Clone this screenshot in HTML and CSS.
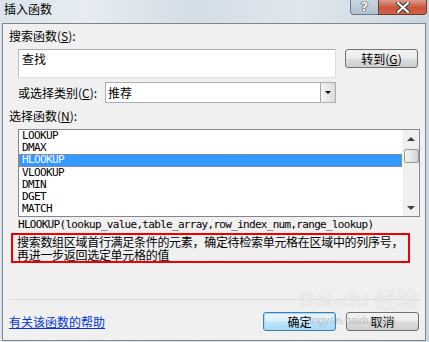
FILE: index.html
```html
<!DOCTYPE html>
<html lang="zh-CN">
<head>
  <meta charset="UTF-8">
  <title>插入函数</title>
  <link rel="stylesheet" href="styles.css">
</head>
<body>
  <div class="window">
    <div class="titlebar">
      <span class="caption">插入函数</span>
      <div class="caption-btns">
        <div class="cap-help">?</div>
        <div class="cap-close">
          <svg width="14" height="11" viewBox="0 0 14 11">
            <path d="M2 1 L12 10 M12 1 L2 10" stroke="#3a3a3a" stroke-width="4.2" stroke-linecap="round"/>
            <path d="M2 1 L12 10 M12 1 L2 10" stroke="#fff" stroke-width="2.2" stroke-linecap="round"/>
          </svg>
        </div>
      </div>
    </div>

    <div class="client">
      <div class="label">搜索函数(<u>S</u>):</div>
      <div class="row-search">
        <div class="textbox">查找</div>
        <button class="btn">转到(<u>G</u>)</button>
      </div>

      <div class="row-category">
        <span class="label-cat">或选择类别(<u>C</u>):</span>
        <div class="combo">
          <span>推荐</span>
          <div class="combo-arrow"></div>
        </div>
      </div>

      <div class="label label-list">选择函数(<u>N</u>):</div>
      <div class="listbox">
        <div class="items">
          <div class="item">LOOKUP</div>
          <div class="item">DMAX</div>
          <div class="item selected">HLOOKUP</div>
          <div class="item">VLOOKUP</div>
          <div class="item">DMIN</div>
          <div class="item">DGET</div>
          <div class="item">MATCH</div>
        </div>
        <div class="scrollbar">
          <div class="arrow-up"></div>
          <div class="thumb"></div>
          <div class="track"></div>
          <div class="arrow-down"></div>
        </div>
      </div>

      <div class="signature">HLOOKUP(lookup_value,table_array,row_index_num,range_lookup)</div>
      <div class="desc">
        <div>搜索数组区域首行满足条件的元素，确定待检索单元格在区域中的列序号，</div>
        <div>再进一步返回选定单元格的值</div>
      </div>

      <div class="separator"></div>

      <div class="row-bottom">
        <a class="help-link" href="#">有关该函数的帮助</a>
        <div class="buttons">
          <button class="btn btn-default">确定</button>
          <button class="btn">取消</button>
        </div>
      </div>

      <div class="watermark">
        <div class="wm-logo">Bai<span class="paw">●</span>du 经验</div>
        <div class="wm-url">jingyan.baidu.com</div>
      </div>
    </div>
  </div>
</body>
</html>
```

FILE: styles.css
```css
body {
  margin: 0;
  font-family: "Noto Sans CJK SC", "Liberation Sans", sans-serif;
  font-size: 12px;
  color: #000;
}
.window {
  width: 429px;
  height: 342px;
  background: linear-gradient(90deg, #dbe4ec 0%, #e6ecf1 20%, #d3dde6 45%, #dfe7ee 70%, #c9d6df 100%);
  overflow: hidden;
}
.titlebar {
  height: 23px;
  display: flex;
  align-items: flex-start;
}
.caption {
  padding: 2px 0 0 4px;
  line-height: 14px;
}
.caption-btns {
  margin-left: auto;
  margin-right: 2px;
  display: flex;
}
.cap-help {
  width: 27px;
  height: 14px;
  border: 1px solid #6f7e8c;
  border-top: none;
  border-right: none;
  border-radius: 0 0 0 4px;
  background: linear-gradient(#c9d5e0, #b3c2d0);
  color: #fff;
  font: bold 13px "DejaVu Sans", sans-serif;
  line-height: 13px;
  text-align: center;
  text-shadow: 0 0 1px #333, 0 0 1px #333, 0 0 1px #333;
}
.cap-close {
  width: 47px;
  height: 14px;
  border: 1px solid #6f3a32;
  border-top: none;
  border-radius: 0 0 4px 0;
  background: linear-gradient(#d99c8c, #c8563e 55%, #d4613f);
  display: flex;
  justify-content: center;
  align-items: center;
}
.client {
  position: relative;
  margin-left: 2px;
  width: 424px;
  height: 318px;
  box-sizing: border-box;
  border: 1px solid #7b8793;
  background: #f0f0f0;
  padding: 6px 0 0 6px;
}
.label {
  line-height: 12px;
}
.row-search {
  display: flex;
  align-items: flex-start;
  gap: 9px;
  margin: 7px 0 0 9px;
}
.textbox {
  width: 318px;
  height: 29px;
  box-sizing: border-box;
  border: 1px solid #abadb3;
  border-color: #a9aeb4 #dadfe4 #dadfe4 #b9bec4;
  background: #fff;
  padding: 2px 0 0 3px;
  line-height: 13px;
}
.btn {
  width: 73px;
  height: 19px;
  box-sizing: border-box;
  border: 1px solid #707070;
  border-radius: 3px;
  background: linear-gradient(#f2f2f2 0%, #ebebeb 48%, #dddddd 52%, #cfcfcf 100%);
  font-family: "Noto Sans CJK SC", sans-serif;
  font-size: 12px;
  line-height: 15px;
  padding: 0;
  color: #000;
}
.btn-default {
  border-color: #3c7fb1;
  box-shadow: inset 0 0 0 1px #a7d8f5;
  background: linear-gradient(#eaf6fd 0%, #d9effc 48%, #bee6fd 52%, #a7d9f5 100%);
}
.row-category {
  display: flex;
  align-items: center;
  margin: 4px 0 0 9px;
}
.label-cat {
  width: 87px;
  line-height: 12px;
}
.combo {
  width: 231px;
  height: 21px;
  box-sizing: border-box;
  border: 1px solid #a9aeb4;
  background: #fff;
  display: flex;
  align-items: center;
  padding-left: 2px;
}
.combo span {
  flex: 1;
  line-height: 13px;
}
.combo-arrow {
  width: 15px;
  height: 19px;
  box-sizing: border-box;
  border-left: 1px solid #9ea4aa;
  background: linear-gradient(90deg, #f4f4f4, #dcdcdc);
  position: relative;
}
.combo-arrow::after {
  content: "";
  position: absolute;
  left: 4px;
  top: 8px;
  border-left: 3px solid transparent;
  border-right: 3px solid transparent;
  border-top: 3px solid #000;
}
.label-list {
  margin-top: 7px;
}
.listbox {
  margin: 7px 0 0 9px;
  width: 402px;
  height: 88px;
  box-sizing: border-box;
  border: 1px solid #828790;
  background: #fff;
  display: flex;
}
.items {
  flex: 1;
  font-family: "DejaVu Sans Mono", "Liberation Mono", monospace;
  font-size: 11px;
  letter-spacing: -0.62px;
}
.item {
  height: 12px;
  line-height: 12px;
  padding-left: 3px;
}
.item.selected {
  background: #3399ff;
  color: #fff;
  outline: 1px dotted #d08040;
  outline-offset: -1px;
  height: 13px;
}
.scrollbar {
  width: 16px;
  background: #f0f0f0;
  border-left: 1px solid #f6f6f6;
  display: flex;
  flex-direction: column;
  align-items: center;
}
.arrow-up, .arrow-down {
  height: 18px;
  width: 16px;
  position: relative;
}
.arrow-up::after, .arrow-down::after {
  content: "";
  position: absolute;
  left: 4px;
  border-left: 4px solid transparent;
  border-right: 4px solid transparent;
}
.arrow-up::after {
  top: 7px;
  border-bottom: 4px solid #404040;
}
.arrow-down::after {
  top: 8px;
  border-top: 4px solid #404040;
}
.thumb {
  margin-top: 1px;
  width: 15px;
  height: 14px;
  box-sizing: border-box;
  border: 1px solid #989898;
  border-radius: 2px;
  background: linear-gradient(90deg, #f3f3f3, #e3e3e3 60%, #cfcfcf);
}
.track {
  flex: 1;
}
.signature {
  margin: 2px 0 0 9px;
  font-family: "DejaVu Sans Mono", "Liberation Mono", monospace;
  font-size: 11px;
  letter-spacing: -0.7px;
  line-height: 12px;
}
.desc {
  margin: 2px 0 0 2px;
  width: 399px;
  height: 30px;
  box-sizing: border-box;
  border: 2px solid #f00000;
  padding: 0 0 0 4px;
  line-height: 13px;
  font-size: 12px;
  letter-spacing: -0.3px;
  white-space: nowrap;
}
.separator {
  margin-top: 36px;
  height: 1px;
  width: 411px;
  background: #d5dde3;
}
.row-bottom {
  display: flex;
  align-items: center;
  margin-top: 12px;
}
.help-link {
  color: #0033dd;
  text-decoration: underline;
  line-height: 13px;
}
.buttons {
  margin-left: auto;
  margin-right: 6px;
  display: flex;
  gap: 10px;
}
.watermark {
  position: absolute;
  left: 296px;
  top: 264px;
  pointer-events: none;
  color: rgba(255, 255, 255, 0.55);
  text-shadow: 0 0 1px rgba(170, 170, 170, 0.45);
}
.wm-logo {
  font: bold 22px "Liberation Sans", "Noto Sans CJK SC", sans-serif;
  line-height: 24px;
}
.paw {
  font-size: 14px;
}
.wm-url {
  margin-left: 8px;
  font: 11px "Liberation Sans", sans-serif;
  color: rgba(180, 180, 180, 0.45);
}
```
